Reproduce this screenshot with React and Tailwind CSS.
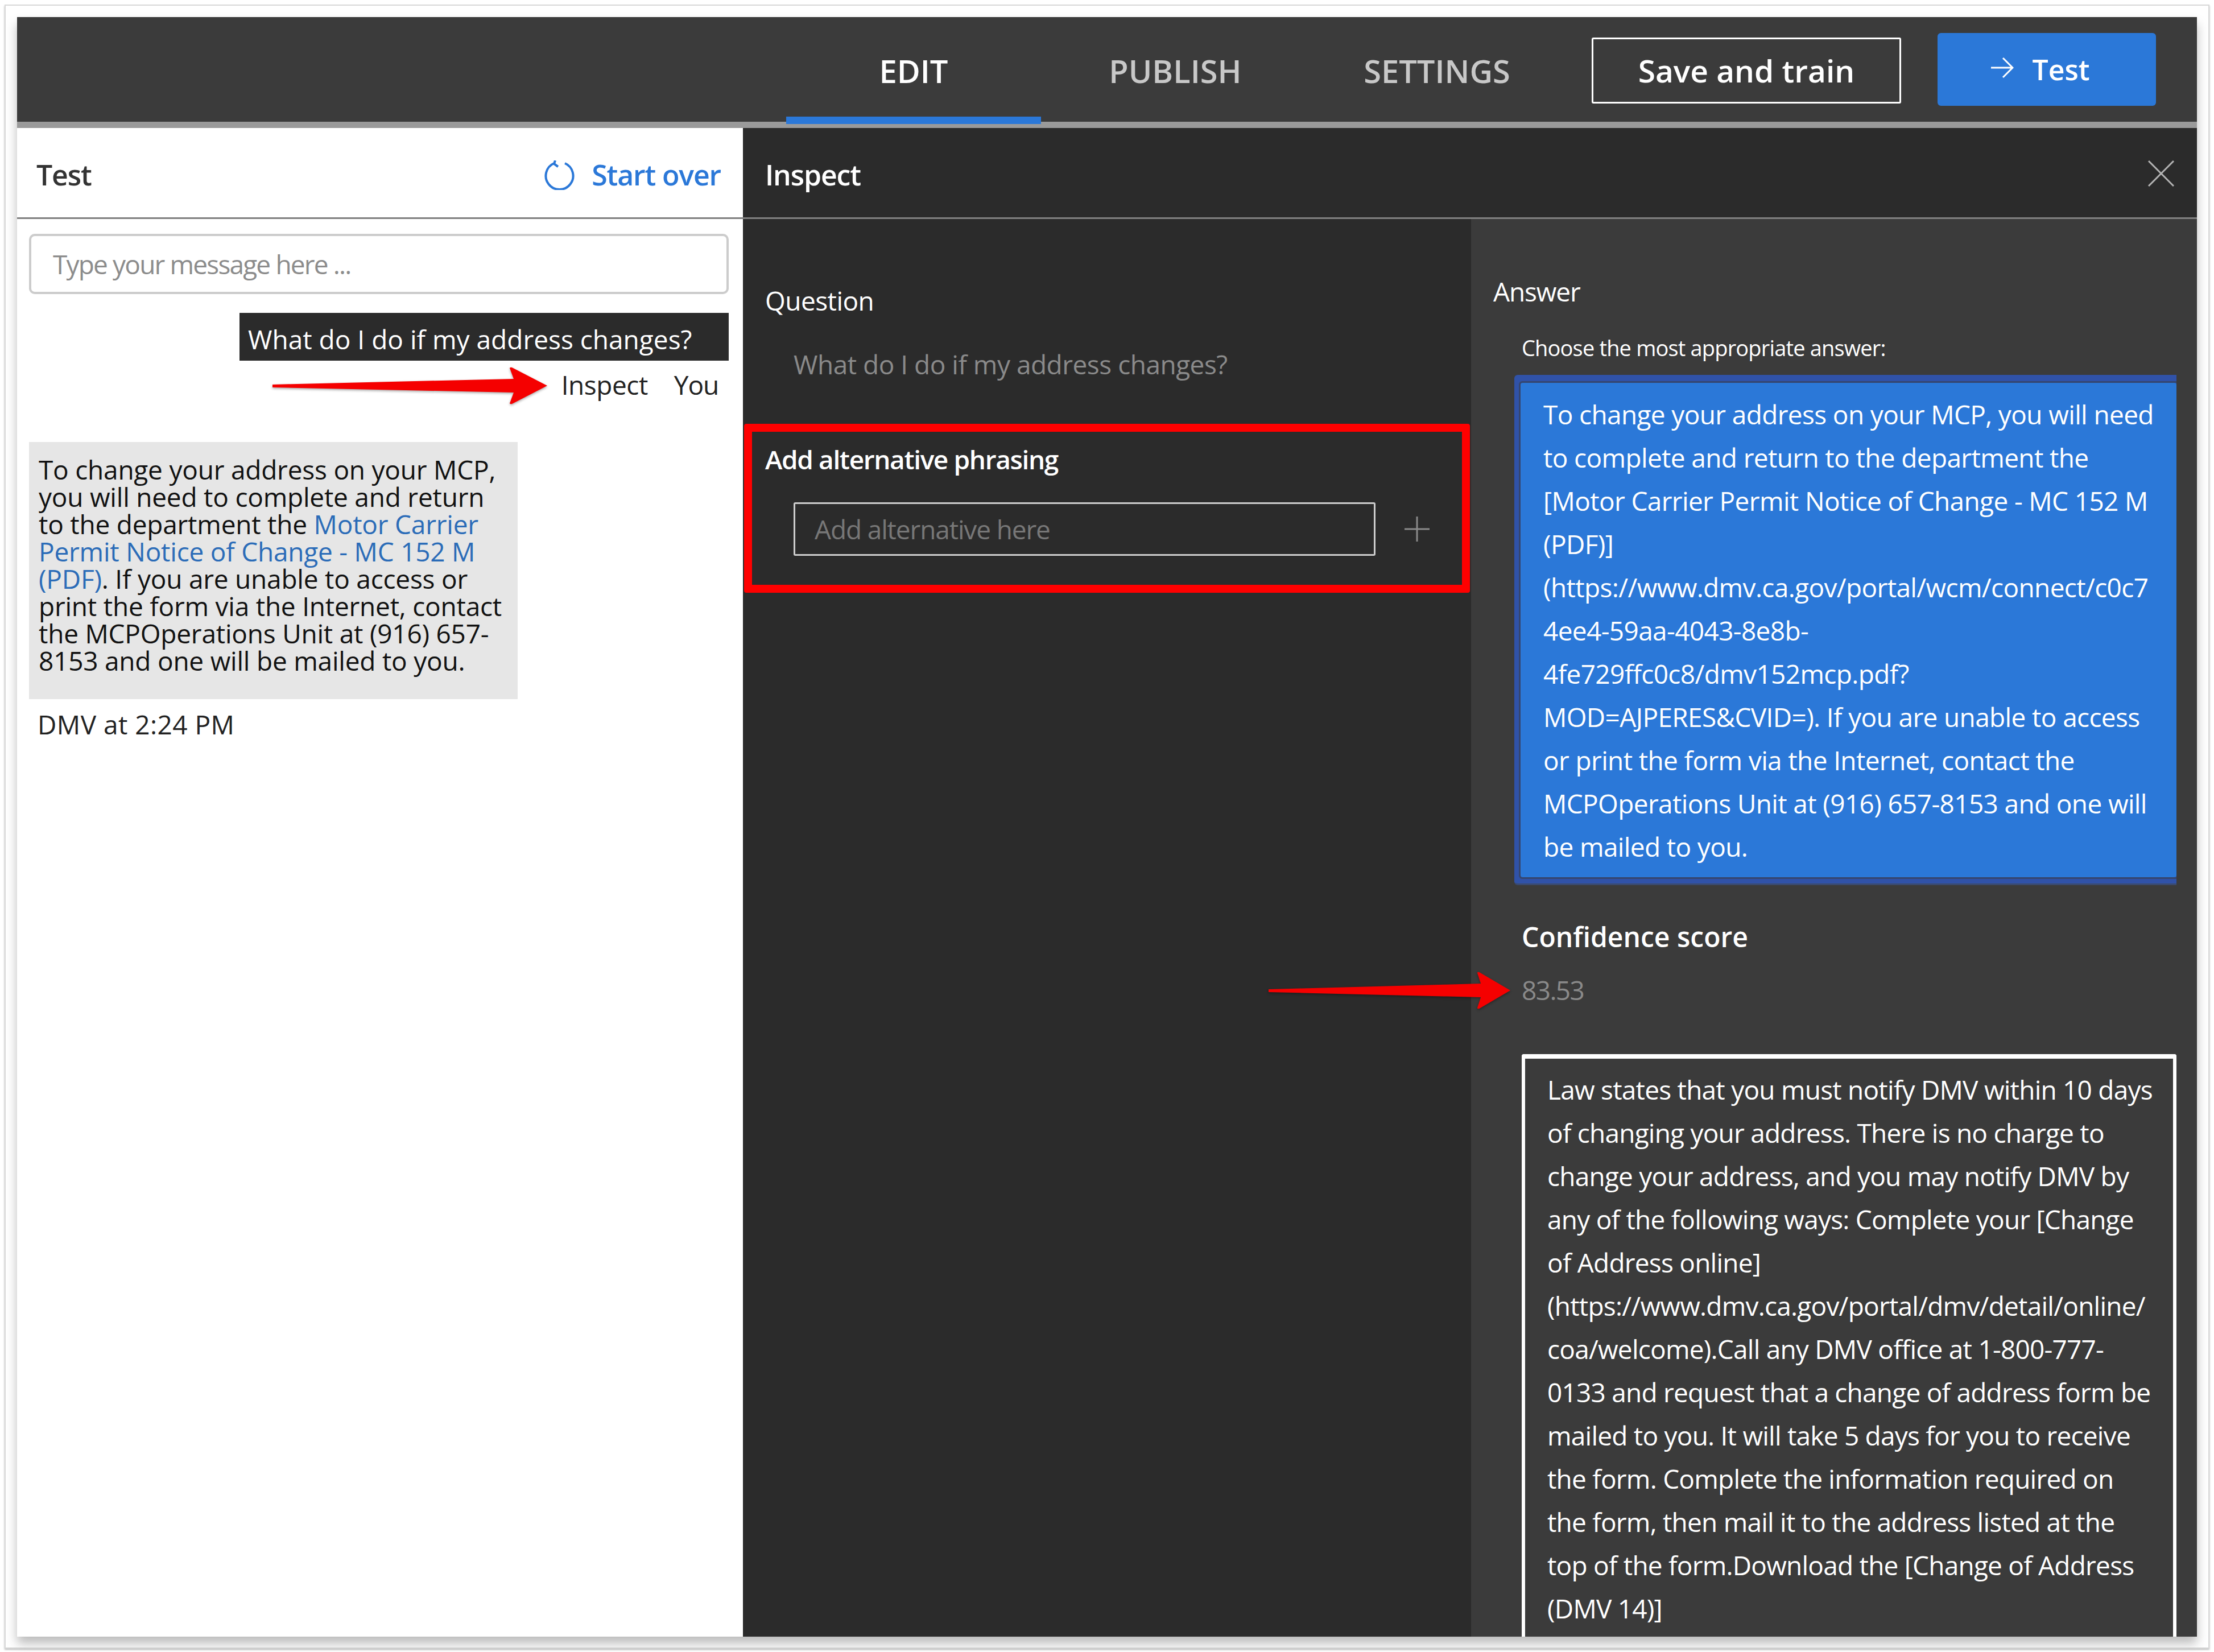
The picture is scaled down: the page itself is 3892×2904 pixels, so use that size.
const bubbleLines = [
  ["To change your address on your MCP,"],
  ["you will need to complete and return"],
  ["to the department the ", "Motor Carrier"],
  ["", "Permit Notice of Change - MC 152 M"],
  ["", "(PDF)", ". If you are unable to access or"],
  ["print the form via the Internet, contact"],
  ["the MCPOperations Unit at (916) 657-"],
  ["8153 and one will be mailed to you."],
];

const answerLines = [
  "To change your address on your MCP, you will need",
  "to complete and return to the department the",
  "[Motor Carrier Permit Notice of Change - MC 152 M",
  "(PDF)]",
  "(https://www.dmv.ca.gov/portal/wcm/connect/c0c7",
  "4ee4-59aa-4043-8e8b-",
  "4fe729ffc0c8/dmv152mcp.pdf?",
  "MOD=AJPERES&CVID=). If you are unable to access",
  "or print the form via the Internet, contact the",
  "MCPOperations Unit at (916) 657-8153 and one will",
  "be mailed to you.",
];

const altLines = [
  "Law states that you must notify DMV within 10 days",
  "of changing your address. There is no charge to",
  "change your address, and you may notify DMV by",
  "any of the following ways: Complete your [Change",
  "of Address online]",
  "(https://www.dmv.ca.gov/portal/dmv/detail/online/",
  "coa/welcome).Call any DMV office at 1-800-777-",
  "0133 and request that a change of address form be",
  "mailed to you. It will take 5 days for you to receive",
  "the form. Complete the information required on",
  "the form, then mail it to the address listed at the",
  "top of the form.Download the [Change of Address",
  "(DMV 14)]",
];

// red annotation arrow
function RedArrow({ className }) {
  return (
    <svg className={className} viewBox="0 0 483 66" preserveAspectRatio="none">
      <path d="M0 31 L424 21 L417 2 Q418 0 421 1 L483 33 L421 65 Q418 66 417 64 L424 45 L0 36 Z" fill="#f50000" />
    </svg>
  );
}

function App() {
  return (
    <div className="w-[3892px] h-[2904px] bg-white p-[8px] font-['Open_Sans','Noto_Sans',sans-serif] text-[46px] tracking-[-0.025em]">
      <div className="h-[2890px] border-2 border-[#d9d9d9] px-[20px] pt-[20px] pb-[19px] shadow-[0_2px_3px_#bbb]">
        <div className="relative h-full flex flex-col shadow-[0_12px_18px_#bbb]">
          {/* top bar */}
          <header className="h-[195px] shrink-0 flex bg-[#3b3b3b] border-b-[11px] border-[#9a9a9a] pl-[1352px]">
            <div className="flex gap-[12px]">
              <div className="w-[448px] h-[188px] flex justify-center pt-[52px] border-b-[13px] border-[#2b78d8] text-white font-semibold text-[56px] tracking-normal">EDIT</div>
              <div className="w-[448px] flex justify-center pt-[52px] text-[#c8c8c8] font-semibold text-[56px] tracking-normal">PUBLISH</div>
              <div className="w-[448px] flex justify-center pt-[52px] text-[#c8c8c8] font-semibold text-[56px] tracking-normal">SETTINGS</div>
            </div>
            <button className="ml-[48px] mt-[36px] w-[544px] h-[116px] border-[3px] border-white rounded-[3px] text-white font-semibold text-[55px] tracking-normal">Save and train</button>
            <button className="ml-[64px] mt-[28px] w-[384px] h-[128px] bg-[#2b78d8] rounded-[6px] flex items-center justify-center gap-[32px] pr-[22px] text-white font-semibold text-[50px] tracking-normal">
              <svg width="40" height="38" viewBox="0 0 40 38" fill="none" stroke="white" strokeWidth="3" className="-mt-[6px]">
                <path d="M0 19 H38 M21 2 L38 19 L21 36" />
              </svg>
              Test
            </button>
          </header>

          <div className="flex-1 flex min-h-0">
            {/* chat column */}
            <section className="w-[1276px] shrink-0 bg-white flex flex-col text-[#1f1f1f]">
              <div className="h-[160px] shrink-0 flex items-center justify-between pt-[8px] pl-[34px] pr-[39px] border-b-[3px] border-[#808080]">
                <span className="text-[#333] font-semibold text-[50px]">Test</span>
                <div className="flex items-center gap-[29px] text-[#2b78d8] font-semibold text-[50px]">
                  <svg width="54" height="52" viewBox="0 0 54 52" fill="none" stroke="#2b78d8" strokeWidth="4">
                    <path d="M36 5 A24 24 0 1 1 17 5 M19 0 L17 6 L24 11" />
                  </svg>
                  Start over
                </div>
              </div>
              <div className="flex flex-col w-[1230px] ml-[21px] pt-[26px]">
                <div className="h-[106px] border-4 border-[#cccccc] rounded-[10px] flex items-center pl-[38px] text-[#8c8c8c] tracking-[-0.04em]">Type your message here ...</div>
                <div className="self-end mt-[33px] w-[860px] h-[84px] bg-[#2b2b2b] text-white flex items-center pl-[15px] pt-[8px] whitespace-nowrap tracking-normal">What do I do if my address changes?</div>
                <div className="h-[88px] flex items-center justify-end gap-[46px] pr-[18px] pb-[4px] text-[#222]">
                  <span className="tracking-[-0.01em]">Inspect</span>
                  <span>You</span>
                </div>
                <div className="mt-[55px] w-[859px] h-[452px] bg-[#e6e6e6] pt-[24px] pl-[17px] leading-[48px] whitespace-nowrap text-[#111] tracking-[-0.005em]">
                  {bubbleLines.map((l, i) => (
                    <div key={i}>
                      {l[0]}
                      {l[1] && <span className="text-[#2b6cb8]">{l[1]}</span>}
                      {l[2]}
                    </div>
                  ))}
                </div>
                <div className="mt-[20px] pl-[15px] leading-[48px] text-[#222] tracking-[0.01em]">DMV at 2:24 PM</div>
              </div>
            </section>

            {/* inspect */}
            <section className="flex-1 flex flex-col min-w-0 bg-[#2b2b2b] text-white">
              <div className="h-[160px] shrink-0 flex items-center justify-between pt-[8px] pl-[39px] pr-[40px] border-b-[3px] border-[#808080]">
                <span className="font-semibold text-[50px]">Inspect</span>
                <svg width="46" height="46" viewBox="0 0 46 46" fill="none" stroke="#b4b4b4" strokeWidth="3" className="-mt-[6px]">
                  <path d="M1 1 L45 45 M45 1 L1 45" />
                </svg>
              </div>
              <div className="flex-1 flex min-h-0">
                <div className="w-[1280px] shrink-0 flex flex-col pt-[113px]">
                  <div className="pl-[39px] leading-[60px] tracking-[-0.012em]">Question</div>
                  <div className="pl-[89px] mt-[52px] leading-[60px] text-[#8a8a8a] tracking-[-0.011em]">What do I do if my address changes?</div>
                  <div className="mt-[75px] ml-[2px] w-[1276px] h-[297px] border-[14px] border-[#ff0000] rounded-[4px] pt-[18px] pl-[23px]">
                    <div className="leading-[60px] font-semibold text-[46px] tracking-[-0.03em]">Add alternative phrasing</div>
                    <div className="mt-[46px] ml-[50px] flex items-center gap-[51px]">
                      <div className="w-[1023px] h-[94px] border-[3px] border-[#cccccc] rounded-[3px] flex items-center pl-[34px] text-[#777]">Add alternative here</div>
                      <svg width="44" height="44" viewBox="0 0 44 44" stroke="#8a8a8a" strokeWidth="3">
                        <path d="M22 0 V44 M0 22 H44" />
                      </svg>
                    </div>
                  </div>
                </div>

                <div className="flex-1 min-w-0 bg-[#3b3b3b] flex flex-col pt-[97px] pl-[39px] overflow-hidden">
                  <div className="leading-[60px]">Answer</div>
                  <div className="mt-[44px] ml-[50px] leading-[50px] text-[38px] tracking-[-0.022em]">Choose the most appropriate answer:</div>
                  <div className="mt-[23px] ml-[37px] w-[1164px] bg-[#3052a8] rounded-l-[6px] pt-[11px] pl-[8px] pb-[8px] border-b-[3px] border-[#3a4a70]">
                    <div className="border-y-[3px] border-l-[3px] border-[#35466e] rounded-l-[6px]">
                      <div className="bg-[#2b78d8] rounded-[4px] pt-[17px] pb-[16px] pl-[40px] leading-[76px] whitespace-nowrap tracking-[-0.014em]">
                        {answerLines.map((l) => (
                          <div key={l}>{l}</div>
                        ))}
                      </div>
                    </div>
                  </div>
                  <div className="mt-[61px] ml-[50px] leading-[60px] font-semibold text-[48px] tracking-normal">Confidence score</div>
                  <div className="mt-[33px] ml-[50px] leading-[60px] text-[#8a8a8a] tracking-[-0.035em]">83.53</div>
                  <div className="mt-[83px] ml-[50px] w-[1151px] flex-1 border-x-[6px] border-t-[8px] border-white rounded-t-[4px] pt-[16px] pl-[39px] leading-[76px] whitespace-nowrap tracking-[-0.017em]">
                    {altLines.map((l) => (
                      <div key={l}>{l}</div>
                    ))}
                  </div>
                </div>
              </div>
            </section>
          </div>

          {/* annotations over the screenshot */}
          <RedArrow className="absolute left-[449px] top-[615px] w-[483px] h-[66px] drop-shadow-[0_2px_2px_rgba(0,0,0,0.35)]" />
          <RedArrow className="absolute left-[2200px] top-[1678px] w-[425px] h-[66px] drop-shadow-[0_2px_2px_rgba(0,0,0,0.35)]" />
        </div>
      </div>
    </div>
  );
}

export default App;
